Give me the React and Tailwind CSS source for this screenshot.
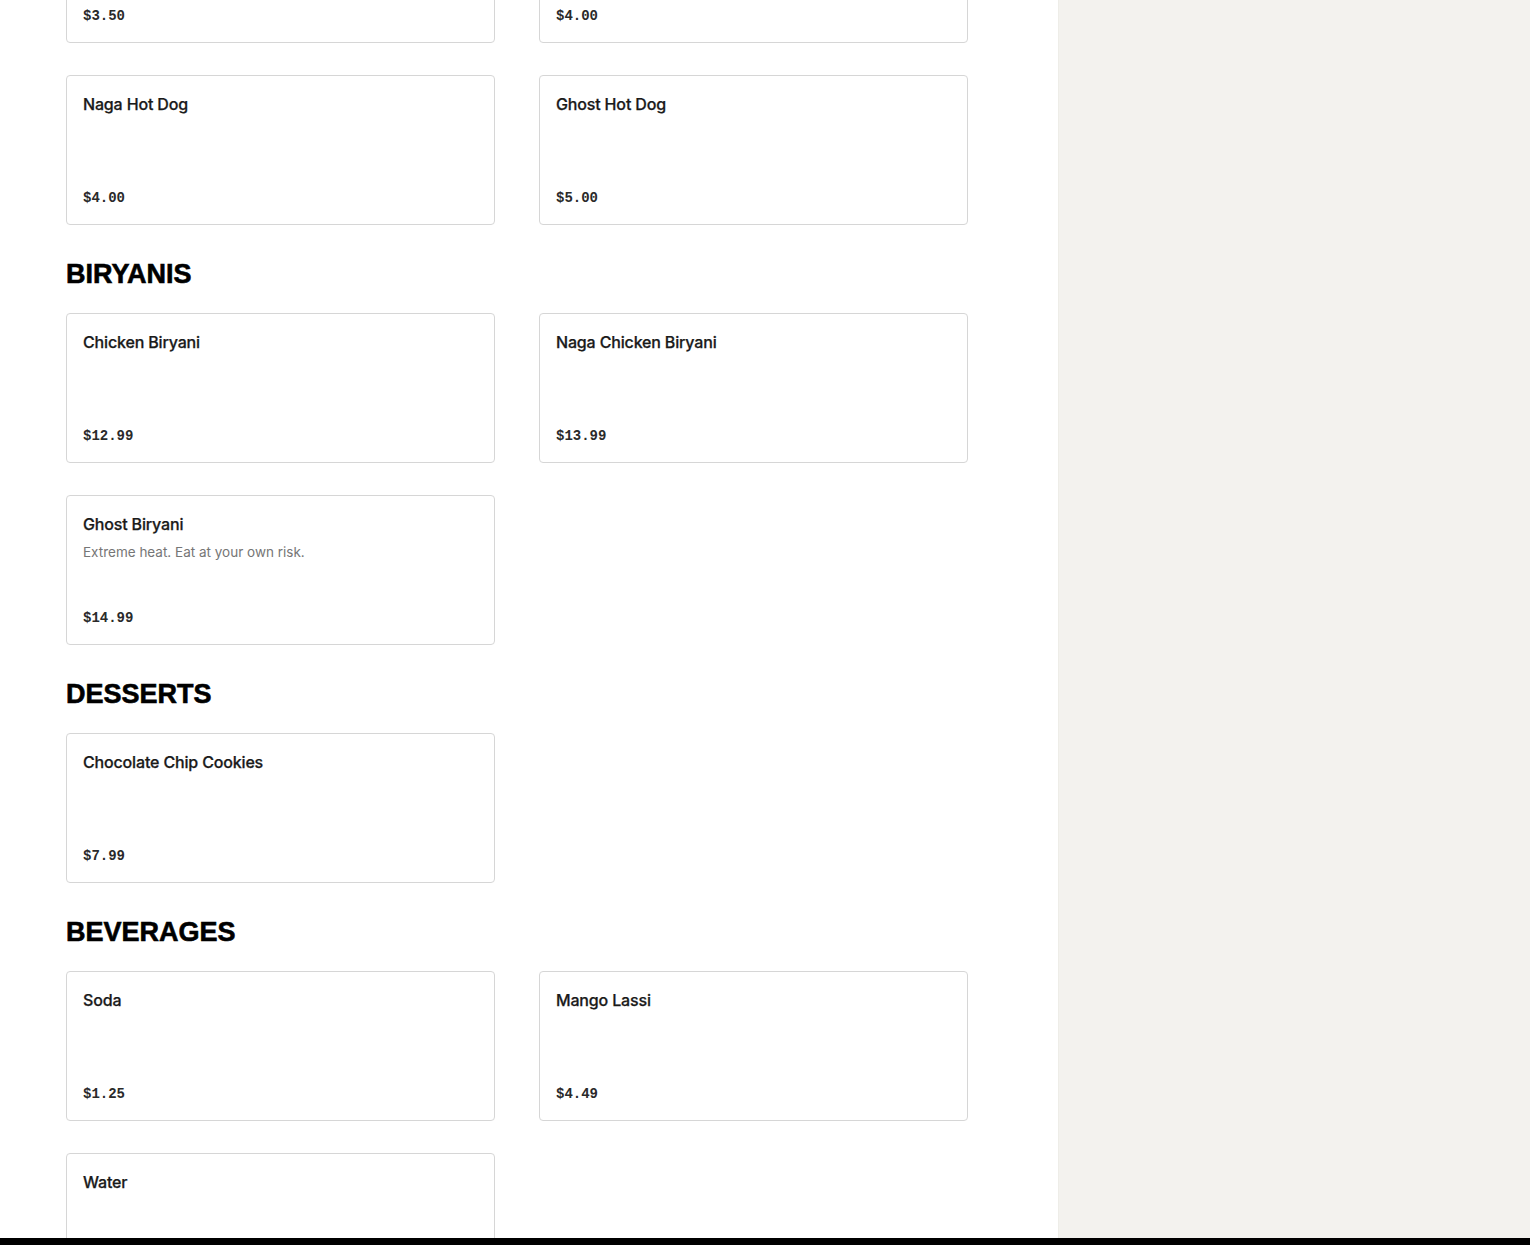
import React from 'react'

const sections = [
  {
    title: 'HOT DOGS',
    hideTitle: true,
    items: [
      { name: 'Classic Hot Dog', price: '$3.50' },
      { name: 'Chili Hot Dog', price: '$4.00' },
      { name: 'Naga Hot Dog', price: '$4.00' },
      { name: 'Ghost Hot Dog', price: '$5.00' },
    ],
  },
  {
    title: 'BIRYANIS',
    items: [
      { name: 'Chicken Biryani', price: '$12.99' },
      { name: 'Naga Chicken Biryani', price: '$13.99' },
      { name: 'Ghost Biryani', desc: 'Extreme heat. Eat at your own risk.', price: '$14.99' },
    ],
  },
  {
    title: 'DESSERTS',
    items: [{ name: 'Chocolate Chip Cookies', price: '$7.99' }],
  },
  {
    title: 'BEVERAGES',
    items: [
      { name: 'Soda', price: '$1.25' },
      { name: 'Mango Lassi', price: '$4.49' },
      { name: 'Water', price: '$1.00' },
    ],
  },
]

function MenuCard({ item }) {
  return (
    <div className="h-[150px] bg-white border border-[#d6d6d6] rounded-[4px] p-4 flex flex-col justify-between">
      <div>
        <p className="text-[16px] leading-6 font-medium tracking-[-0.01em] text-[#1a1a1a] font-['Inter',sans-serif] [-webkit-text-stroke:0.25px_#1a1a1a]">
          {item.name}
        </p>
        {item.desc && (
          <p className="mt-[6px] text-[13.5px] leading-5 text-[#767676] font-['Inter',sans-serif]">{item.desc}</p>
        )}
      </div>
      <p className="text-[14px] leading-5 font-bold text-[#2a2a2a] font-['Liberation_Mono',monospace]">{item.price}</p>
    </div>
  )
}

export default function App() {
  return (
    <div className="h-[1245px] w-full flex flex-col overflow-hidden">
      <div className="h-[1238px] flex overflow-hidden">
        {/* menu column */}
        <main className="w-[1058px] bg-white pl-[66px] overflow-hidden">
          <div className="mt-[-107px] w-[902px] flex flex-col gap-8">
            {sections.map((s) => (
              <section key={s.title}>
                {!s.hideTitle && (
                  <h2 className="pt-px mb-[23px] text-[27px] leading-8 font-bold text-black font-['Liberation_Sans',sans-serif] [-webkit-text-stroke:0.6px_black]">
                    {s.title}
                  </h2>
                )}
                <div className="grid grid-cols-[429px_429px] gap-x-[44px] gap-y-8">
                  {s.items.map((it) => (
                    <MenuCard key={it.name} item={it} />
                  ))}
                </div>
              </section>
            ))}
          </div>
        </main>
        {/* side panel */}
        <aside className="flex-1 bg-[#f3f2ee] border-l border-[#eeede8]" />
      </div>
      <div className="h-[7px] bg-black" />
    </div>
  )
}
